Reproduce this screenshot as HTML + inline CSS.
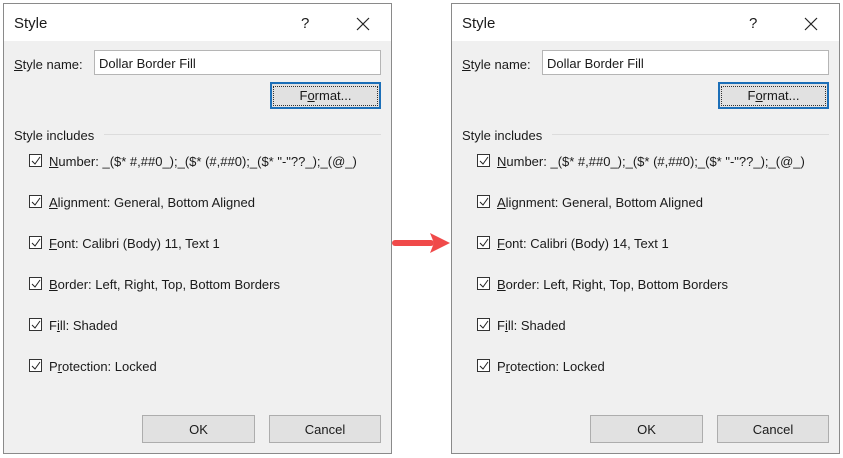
<!DOCTYPE html>
<html><head><style>
body{margin:0;width:843px;height:458px;background:#fff;position:relative;font-family:"Liberation Sans",sans-serif;font-size:13px;color:#1a1a1a;overflow:hidden}
.d{position:absolute;top:3px;width:387px;height:449px;border:1px solid #8a8a8a;background:#f0f0f0}
.tb{position:absolute;left:0;top:0;right:0;height:37px;background:#fff}
.a{position:absolute;white-space:nowrap}
.inp{position:absolute;left:90px;top:46px;width:285px;height:23px;background:#fff;border:1px solid #b5b5b5}
.btn{position:absolute;background:#e1e1e1;border:1px solid #adadad;text-align:center;box-sizing:border-box}
.cb{position:absolute;left:25px;width:11px;height:11px;border:1px solid #333;background:#fff}
.cb svg{position:absolute;left:1px;top:1px}
</style></head><body>
<div id="t"></div>
<svg style="position:absolute;left:390px;top:230px" width="62" height="26"><rect x="2" y="10" width="42" height="6" rx="3" fill="#f04a4a"/><polygon points="40,3 60,13 40,23 44,13" fill="#f04a4a"/></svg>
<script>
var rows=[["N","umber: _($* #,##0_);_($* (#,##0);_($* \"-\"??_);_(@_)"],["A","lignment: General, Bottom Aligned"],["F","ont: Calibri (Body) 11, Text 1"],["B","order: Left, Right, Top, Bottom Borders"],["F<u>i</u>ll: Shaded",""],["P<u>r</u>otection: Locked",""]];
function dlg(x,sz){var h='<div class="d" style="left:'+x+'px"><div class="tb"></div>'+
'<div class="a" style="left:10px;top:11px;font-size:15px">Style</div>'+
'<div class="a" style="left:297px;top:11px;font-size:15px">?</div>'+
'<svg class="a" style="left:352px;top:13px" width="14" height="14"><path d="M1 1L13 13M13 1L1 13" stroke="#222" stroke-width="1.2"/></svg>'+
'<div class="a" style="left:10px;top:53px"><u>S</u>tyle name:</div><div class="inp"><span class="a" style="left:4px;top:5px">Dollar Border Fill</span></div>'+
'<div class="btn" style="left:266px;top:78px;width:111px;height:27px;border:2px solid #1c6fb8;padding-top:4px"><span style="border:1px dotted #333;display:block;margin:-2px 1px;padding:1px 0 2px">F<u>o</u>rmat...</span></div>'+
'<div class="a" style="left:10px;top:124px">Style includes</div><div class="a" style="left:100px;top:130px;width:277px;height:1px;background:#dcdcdc"></div>';
for(var i=0;i<6;i++){var y=150+i*41;var r=rows[i];var txt=r[1]===""?r[0]:'<u>'+r[0]+'</u>'+r[1];if(i==2)txt=txt.replace("11",sz);
h+='<div class="cb" style="top:'+(y)+'px"><svg width="10" height="10"><path d="M1 5L4 8L9 1" stroke="#222" fill="none" stroke-width="1"/></svg></div><div class="a" style="left:45px;top:'+(y)+'px">'+txt+'</div>';}
h+='<div class="btn" style="left:138px;top:411px;width:113px;height:28px;line-height:27px">OK</div><div class="btn" style="left:265px;top:411px;width:112px;height:28px;line-height:27px">Cancel</div></div>';return h;}
document.getElementById('t').outerHTML=dlg(3,"11")+dlg(451,"14");
</script>
</body></html>
